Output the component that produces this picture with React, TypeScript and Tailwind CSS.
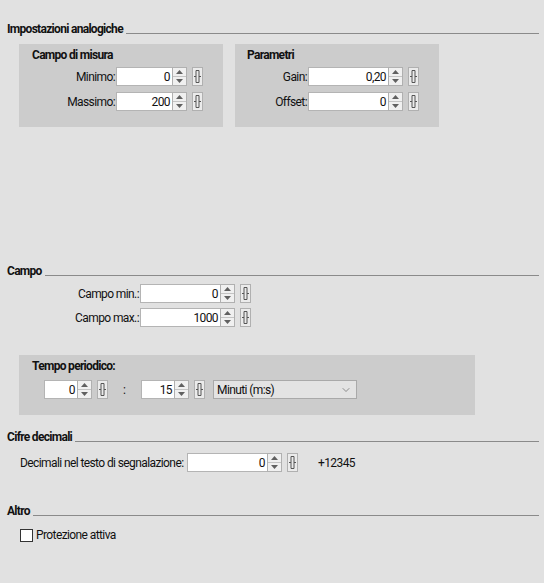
import { ChevronDown } from "lucide-react";

const font = { fontFamily: 'Roboto, "Liberation Sans", sans-serif' };

function Header({ title }: { title: string }) {
  return (
    <div className="flex items-end gap-[3px] pl-[7px] pr-[5px] h-[16px]">
      <span className="font-bold text-[12px] leading-[16px] tracking-[-0.7px] text-[#111]">{title}</span>
      <div className="flex-1 border-b border-[#8a8a8a] mb-[3px]" />
    </div>
  );
}

function Spinner() {
  return (
    <div className="w-[15px] h-[19px] border border-[#b0b0b0] bg-[#f0f0f0] flex flex-col">
      <div className="flex-1 flex items-center justify-center border-b border-[#c4c4c4]">
        <svg width="7" height="4" viewBox="0 0 7 4">
          <path d="M0 4 L3.5 0 L7 4 Z" fill="#606060" />
        </svg>
      </div>
      <div className="flex-1 flex items-center justify-center">
        <svg width="7" height="4" viewBox="0 0 7 4">
          <path d="M0 0 L3.5 4 L7 0 Z" fill="#606060" />
        </svg>
      </div>
    </div>
  );
}

function Lock() {
  return (
    <div className="w-[11px] h-[19px] border border-[#b0b0b0] bg-[#ebebeb] flex items-center justify-center">
      <svg width="9" height="15" viewBox="0 0 9 15">
        <path d="M3 1.5 H6 V13.5 H3 Z M1 7.5 H3 M6 7.5 H8" stroke="#555" strokeWidth="1" fill="none" />
      </svg>
    </div>
  );
}

function SpinField({ value, width }: { value: string; width: number }) {
  return (
    <div className="flex items-center">
      <div
        className="h-[19px] bg-white border border-[#b4b4b4] border-r-0 flex items-center justify-end pr-[2px] text-[12px] tracking-[-0.6px] text-[#111]"
        style={{ width }}
      >
        {value}
      </div>
      <Spinner />
      <div className="ml-[5px]">
        <Lock />
      </div>
    </div>
  );
}

function Row({ label, value, labelW, inputW }: { label: string; value: string; labelW: number; inputW: number }) {
  return (
    <div className="flex items-center h-[19px]">
      <div className="text-right text-[12px] tracking-[-0.6px] text-[#111] pr-[1px] whitespace-nowrap" style={{ width: labelW }}>
        {label}
      </div>
      <SpinField value={value} width={inputW} />
    </div>
  );
}

export default function App() {
  return (
    <div className="w-[544px] h-[583px] bg-[#e1e1e1] overflow-hidden" style={font}>
      <div className="pt-[21px]">
        <Header title="Impostazioni analogiche" />
      </div>

      <div className="flex gap-[12px] pl-[19px] mt-[7px]">
        <div className="w-[204px] h-[83px] bg-[#cccccc] pt-[3px]">
          <div className="pl-[13px] font-bold text-[12px] leading-[16px] tracking-[-0.7px] text-[#111]">Campo di misura</div>
          <div className="mt-[4px] flex flex-col gap-[6px]">
            <Row label="Minimo:" value="0" labelW={97} inputW={56} />
            <Row label="Massimo:" value="200" labelW={97} inputW={56} />
          </div>
        </div>
        <div className="w-[204px] h-[83px] bg-[#cccccc] pt-[3px]">
          <div className="pl-[12px] font-bold text-[12px] leading-[16px] tracking-[-0.7px] text-[#111]">Parametri</div>
          <div className="mt-[4px] flex flex-col gap-[6px]">
            <Row label="Gain:" value="0,20" labelW={73} inputW={80} />
            <Row label="Offset:" value="0" labelW={73} inputW={80} />
          </div>
        </div>
      </div>

      <div className="mt-[136px]">
        <Header title="Campo" />
      </div>
      <div className="mt-[5px] flex flex-col gap-[5px]">
        <Row label="Campo min.:" value="0" labelW={140} inputW={80} />
        <Row label="Campo max.:" value="1000" labelW={140} inputW={80} />
      </div>

      <div className="ml-[19px] mt-[28px] w-[456px] h-[60px] bg-[#cccccc] pt-[3px]">
        <div className="pl-[13px] font-bold text-[12px] leading-[16px] tracking-[-0.7px] text-[#111]">Tempo periodico:</div>
        <div className="mt-[6px] flex items-center pl-[25px]">
          <SpinField value="0" width={33} />
          <span className="w-[33px] text-center text-[12px] text-[#111]">:</span>
          <SpinField value="15" width={33} />
          <div className="ml-[8px] w-[144px] h-[19px] border border-[#a9a9a9] bg-[#e3e3e3] flex items-center justify-between pl-[3px] pr-[4px] text-[12px] tracking-[-0.6px] text-[#111]">
            <span>Minuti (m:s)</span>
            <ChevronDown size={12} strokeWidth={1.25} color="#555" />
          </div>
        </div>
      </div>

      <div className="mt-[14px]">
        <Header title="Cifre decimali" />
      </div>
      <div className="mt-[8px] flex items-center pl-[20px]">
        <span className="w-[167px] text-[12px] tracking-[-0.6px] text-[#111] whitespace-nowrap">Decimali nel testo di segnalazione:</span>
        <SpinField value="0" width={80} />
        <span className="ml-[20px] text-[12px] tracking-[-0.6px] text-[#111]">+12345</span>
      </div>

      <div className="mt-[31px]">
        <Header title="Altro" />
      </div>
      <div className="mt-[7px] flex items-center pl-[20px] gap-[3px]">
        <div className="w-[13px] h-[13px] bg-white border border-[#333]" />
        <span className="text-[12px] tracking-[-0.6px] text-[#111]">Protezione attiva</span>
      </div>
    </div>
  );
}
